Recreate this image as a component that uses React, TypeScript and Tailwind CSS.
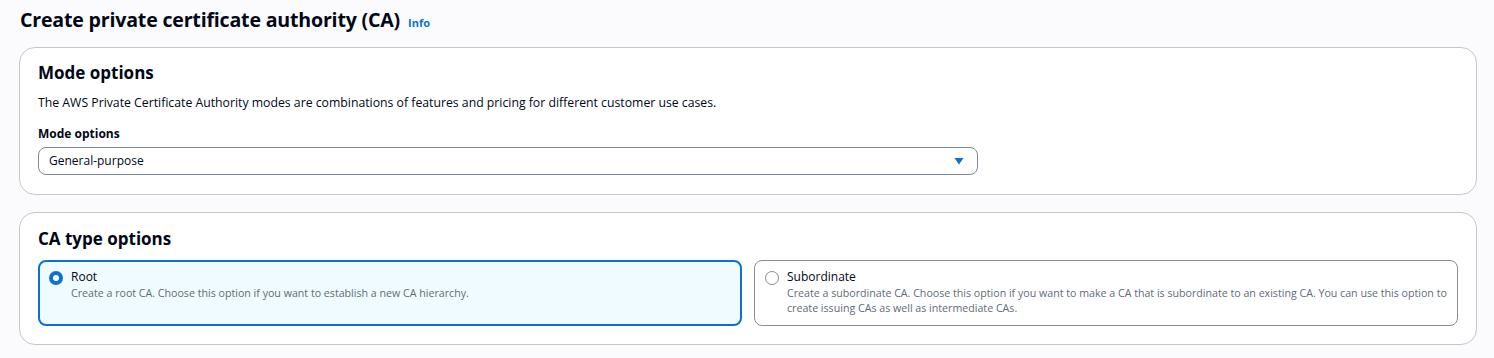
import { useState } from "react";

const font = { fontFamily: '"Open Sans", "Liberation Sans", sans-serif' };

function Radio({ checked }: { checked: boolean }) {
  return checked ? (
    <span className="mt-[2px] box-border block size-[14px] shrink-0 rounded-full border-[4px] border-[#0972d3] bg-white" />
  ) : (
    <span className="mt-[2px] box-border block size-[14px] shrink-0 rounded-full border border-[#8c8c94] bg-white" />
  );
}

export default function App() {
  const [caType, setCaType] = useState("root");

  const options = [
    {
      id: "root",
      title: "Root",
      desc: "Create a root CA. Choose this option if you want to establish a new CA hierarchy.",
    },
    {
      id: "subordinate",
      title: "Subordinate",
      desc: "Create a subordinate CA. Choose this option if you want to make a CA that is subordinate to an existing CA. You can use this option to create issuing CAs as well as intermediate CAs.",
    },
  ];

  return (
    <div className="min-h-[358px] bg-[#fbfbfd] pl-[19px] pr-[17px] pt-[5px] text-[#000716]" style={font}>
      <div className="flex items-baseline gap-[8px] pl-[1px]">
        <h1 className="text-[19.6px] leading-[30px] font-bold tracking-[-0.2px]">
          Create private certificate authority (CA)
        </h1>
        <a className="text-[11px] font-bold text-[#0972d3]">Info</a>
      </div>

      <div className="mt-[12px] rounded-[16px] border border-[#c6c6cd] bg-white px-[18px] pt-[13px] pb-[19px]">
        <h2 className="text-[17px] leading-[24px] font-bold">Mode options</h2>
        <p className="mt-[9px] text-[12.25px] leading-[18px]">
          The AWS Private Certificate Authority modes are combinations of features and pricing for different customer use cases.
        </p>
        <div className="mt-[14px] text-[12px] leading-[16px] font-bold">Mode options</div>
        <div className="mt-[5px] flex h-[28px] w-[940px] items-center justify-between rounded-[8px] border border-[#7d8998] px-[10px]">
          <span className="text-[12px]">General-purpose</span>
          <svg width="10" height="8" viewBox="0 0 10 8" className="mr-[3px]">
            <path d="M0.5 1h9L5 7.5z" fill="#0972d3" />
          </svg>
        </div>
      </div>

      <div className="mt-[17px] rounded-[16px] border border-[#c6c6cd] bg-white px-[18px] pt-[14px] pb-[18px]">
        <h2 className="text-[17px] leading-[24px] font-bold">CA type options</h2>
        <div className="mt-[9px] grid grid-cols-2 gap-[12px]">
          {options.map((o) => {
            const checked = caType === o.id;
            return (
              <button
                key={o.id}
                type="button"
                onClick={() => setCaType(o.id)}
                className={
                  checked
                    ? "flex h-[66px] items-start gap-[8px] rounded-[8px] border-2 border-[#0972d3] bg-[#f0fbff] px-[9px] pt-[7px] text-left"
                    : "flex h-[66px] items-start gap-[8px] rounded-[8px] border border-[#8c8c94] bg-white px-[10px] pt-[8px] text-left"
                }
              >
                <Radio checked={checked} />
                <div>
                  <div className="text-[12px] leading-[16px]">{o.title}</div>
                  <div className="mt-[1px] text-[10.65px] leading-[15px] text-[#5f6b7a]">{o.desc}</div>
                </div>
              </button>
            );
          })}
        </div>
      </div>
    </div>
  );
}
